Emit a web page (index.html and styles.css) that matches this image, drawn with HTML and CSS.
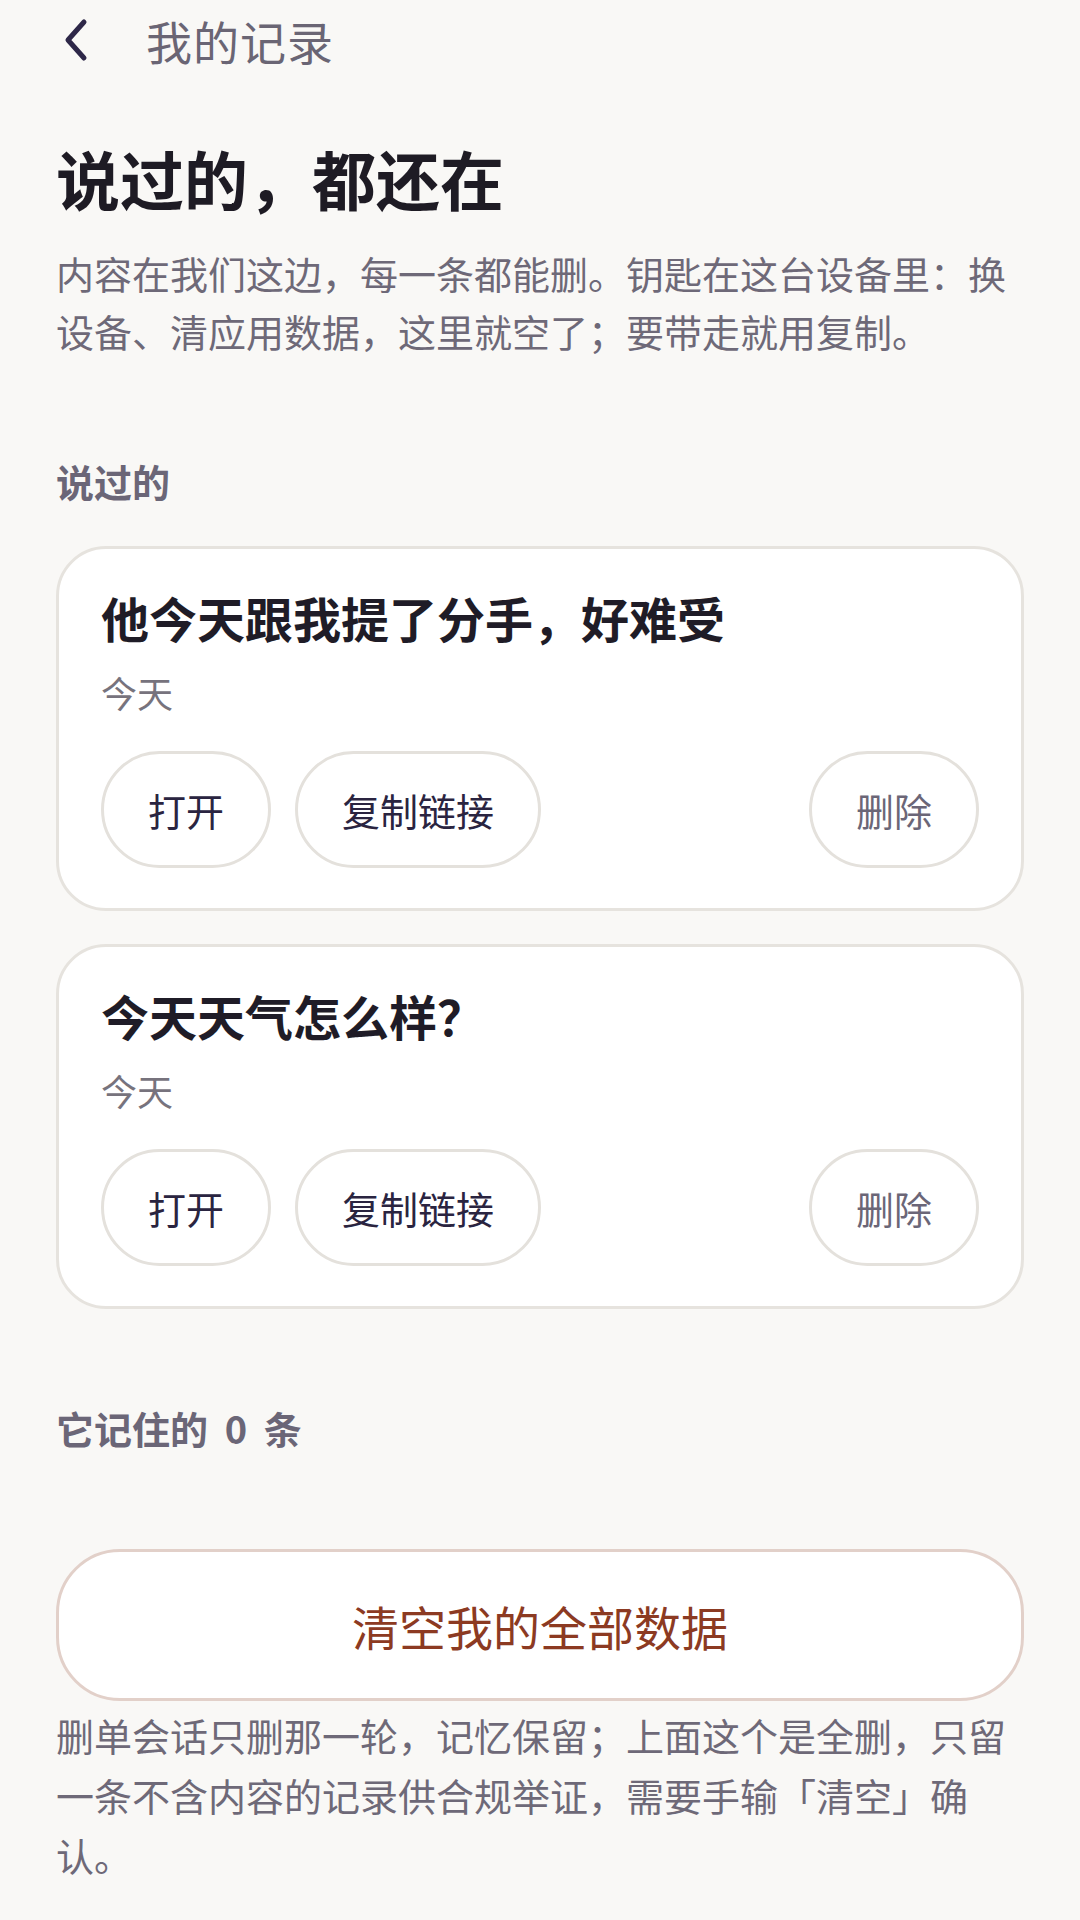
FILE: index.html
```html
<!DOCTYPE html>
<html lang="zh-CN">
  <head>
    <meta charset="utf-8" />
    <meta name="viewport" content="width=device-width, initial-scale=1" />
    <title>我的记录</title>
    <link rel="stylesheet" href="styles.css">
  </head>
  <body>
    <header class="topbar">
      <a class="back" href="#" aria-label="返回">
        <svg viewBox="0 0 28 44" width="28" height="44">
          <path d="M22 4 L6 22 L22 40" fill="none" stroke="#2e2748" stroke-width="5" stroke-linecap="round" stroke-linejoin="round"/>
        </svg>
      </a>
      <span class="topbar-title">我的记录</span>
    </header>

    <main class="page">
      <h1 class="title">说过的，都还在</h1>
      <p class="intro">内容在我们这边，每一条都能删。钥匙在这台设备里：换设备、清应用数据，这里就空了；要带走就用复制。</p>

      <h2 class="section-label">说过的</h2>

      <div class="card">
        <div class="card-title">他今天跟我提了分手，好难受</div>
        <div class="card-date">今天</div>
        <div class="card-actions">
          <button class="pill">打开</button>
          <button class="pill">复制链接</button>
          <button class="pill pill-muted">删除</button>
        </div>
      </div>

      <div class="card">
        <div class="card-title">今天天气怎么样？</div>
        <div class="card-date">今天</div>
        <div class="card-actions">
          <button class="pill">打开</button>
          <button class="pill">复制链接</button>
          <button class="pill pill-muted">删除</button>
        </div>
      </div>

      <h2 class="section-label memory">它记住的 0 条</h2>

      <button class="danger">清空我的全部数据</button>
      <p class="note">删单会话只删那一轮，记忆保留；上面这个是全删，只留一条不含内容的记录供合规举证，需要手输「清空」确认。</p>
    </main>
  </body>
</html>
```

FILE: styles.css
```css
* {
  box-sizing: border-box;
  margin: 0;
  padding: 0;
}

body {
  font-family: "Noto Sans CJK SC", "Noto Sans", sans-serif;
  background-color: #f9f8f6;
  color: #1f1c27;
  width: 1080px;
  min-height: 1920px;
  overflow: hidden;
}

.topbar {
  height: 80px;
  display: flex;
  align-items: center;
  padding-left: 62px;
}

.back {
  display: flex;
  width: 28px;
  height: 44px;
}

.topbar-title {
  margin-left: 56px;
  font-size: 46px;
  color: #6a6574;
  letter-spacing: 1px;
}

.page {
  padding: 0 56px;
}

.title {
  margin-top: 57px;
  font-size: 64px;
  line-height: 80px;
  font-weight: 700;
  color: #1e1b24;
}

.intro {
  margin-top: 27px;
  font-size: 38px;
  line-height: 58px;
  color: #6e6978;
}

.section-label {
  margin-top: 96px;
  font-size: 38px;
  line-height: 50px;
  font-weight: 700;
  color: #6b6677;
}

.section-label.memory {
  margin-top: 94px;
  word-spacing: 8px;
}

.card {
  margin-top: 40px;
  background: #fff;
  border: 3px solid #e6e3de;
  border-radius: 50px;
  padding: 36px 42px 40px 42px;
}

.card + .card {
  margin-top: 33px;
}

.card-title {
  font-size: 48px;
  line-height: 64px;
  font-weight: 700;
  color: #1f1c27;
}

.card-date {
  margin-top: 18px;
  font-size: 36px;
  line-height: 50px;
  color: #77737d;
}

.card-actions {
  margin-top: 34px;
  display: flex;
  gap: 24px;
}

.pill {
  height: 117px;
  padding: 0 44px;
  border: 3px solid #e4e1dc;
  border-radius: 60px;
  background: #fff;
  font-family: inherit;
  font-size: 38px;
  color: #2a2440;
}

.pill-muted {
  margin-left: auto;
  color: #6b6677;
}

.danger {
  display: block;
  width: 100%;
  height: 152px;
  margin-top: 96px;
  border: 3px solid #e2d0c9;
  border-radius: 64px;
  background: #fff;
  font-family: inherit;
  font-size: 47px;
  line-height: 1;
  color: #8c3a22;
}

.note {
  margin-top: 4px;
  font-size: 38px;
  line-height: 60px;
  color: #6e6978;
}
```
